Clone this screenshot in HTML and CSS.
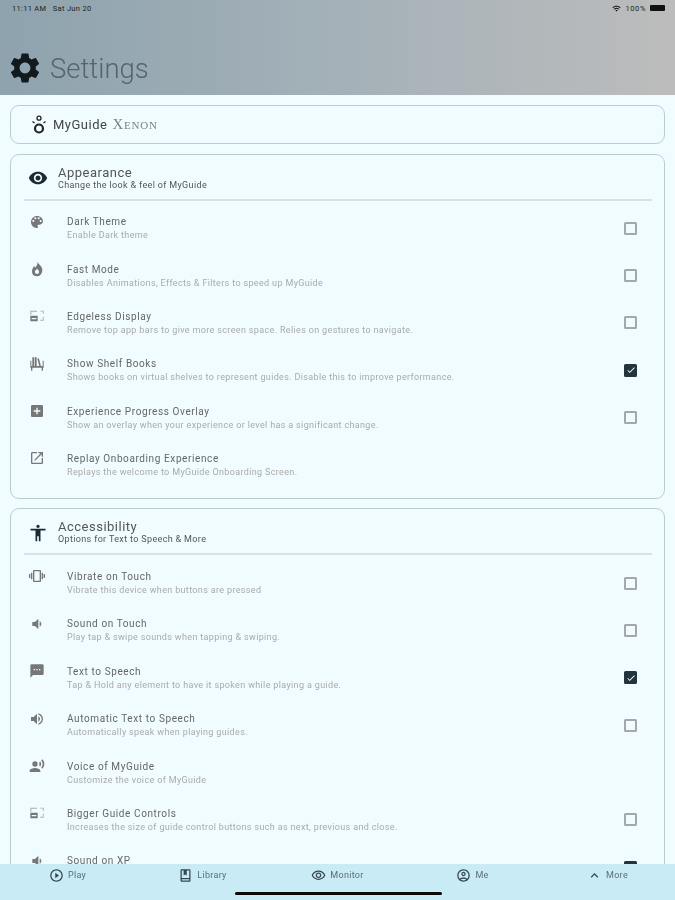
FILE: index.html
```html
<!DOCTYPE html>
<html lang="en">
<head>
	<meta charset="UTF-8">
	<title>Settings</title>
	<link rel="stylesheet" href="styles.css">
</head>
<body>
<div class="page">
	<header class="top">
		<div class="status">
			<span>11:11 AM&nbsp;&nbsp; Sat Jun 20</span>
			<span class="status-right">
				<svg class="wifi" viewBox="0 0 24 24"><path d="M1 9l2 2c4.97-4.97 13.03-4.97 18 0l2-2C16.93 2.93 7.08 2.93 1 9zm8 8l3 3 3-3c-1.65-1.66-4.34-1.66-6 0zm-4-4l2 2c2.76-2.76 7.24-2.76 10 0l2-2C15.14 9.14 8.87 9.14 5 13z"/></svg>
				100%
				<span class="battery"></span>
			</span>
		</div>
		<div class="title-row">
			<svg class="gear" viewBox="0 0 24 24"><path d="M19.14 12.94c.04-.3.06-.61.06-.94 0-.32-.02-.64-.07-.94l2.03-1.58c.18-.14.23-.41.12-.61l-1.92-3.32c-.12-.22-.37-.29-.59-.22l-2.39.96c-.5-.38-1.03-.7-1.62-.94l-.36-2.54c-.04-.24-.24-.41-.48-.41h-3.84c-.24 0-.43.17-.47.41l-.36 2.54c-.59.24-1.13.57-1.62.94l-2.39-.96c-.22-.08-.47 0-.59.22L2.74 8.87c-.12.21-.08.47.12.61l2.03 1.58c-.05.3-.09.63-.09.94s.02.64.07.94l-2.03 1.58c-.18.14-.23.41-.12.61l1.92 3.32c.12.22.37.29.59.22l2.39-.96c.5.38 1.03.7 1.62.94l.36 2.54c.05.24.24.41.48.41h3.84c.24 0 .44-.17.47-.41l.36-2.54c.59-.24 1.13-.56 1.62-.94l2.39.96c.22.08.47 0 .59-.22l1.92-3.32c.12-.22.07-.47-.12-.61l-2.01-1.58zM12 15.6c-1.98 0-3.6-1.62-3.6-3.6s1.62-3.6 3.6-3.6 3.6 1.62 3.6 3.6-1.62 3.6-3.6 3.6z"/></svg>
			<h1>Settings</h1>
		</div>
	</header>

	<main class="content">
		<div class="card brand">
			<svg class="logo" viewBox="0 0 16 20"><circle cx="8" cy="3.2" r="2" stroke-width="1.3"/><circle cx="8" cy="13.500" r="4" stroke-width="2.2"/><path d="M1.500 6.500l2 1.600M14.500 6.500l-2 1.600" stroke-width="1.3"/></svg>
			<span class="brand-name">MyGuide</span>
			<span class="brand-xenon">Xenon</span>
		</div>

		<section class="card">
			<div class="section-head">
				<svg class="section-icon" viewBox="0 0 24 24"><path d="M12 4.5C7 4.5 2.73 7.61 1 12c1.73 4.39 6 7.5 11 7.5s9.27-3.11 11-7.5c-1.73-4.39-6-7.5-11-7.5zM12 17c-2.76 0-5-2.24-5-5s2.24-5 5-5 5 2.24 5 5-2.24 5-5 5zm0-8c-1.66 0-3 1.34-3 3s1.34 3 3 3 3-1.34 3-3-1.34-3-3-3z"/></svg>
				<div>
					<h2>Appearance</h2>
					<p>Change the look &amp; feel of MyGuide</p>
				</div>
			</div>
			<div class="row">
				<svg class="icon" viewBox="0 0 24 24"><path d="M12 3c-4.97 0-9 4.03-9 9s4.03 9 9 9c.83 0 1.5-.67 1.5-1.5 0-.39-.15-.74-.39-1.01-.23-.26-.38-.61-.38-.99 0-.83.67-1.5 1.5-1.5H16c2.76 0 5-2.24 5-5 0-4.42-4.03-8-9-8zm-5.5 9c-.83 0-1.5-.67-1.5-1.5S5.67 9 6.5 9 8 9.67 8 10.5 7.33 12 6.5 12zm3-4C8.67 8 8 7.33 8 6.5S8.67 5 9.5 5s1.5.67 1.5 1.5S10.33 8 9.5 8zm5 0c-.83 0-1.5-.67-1.5-1.5S13.67 5 14.5 5s1.5.67 1.5 1.5S15.33 8 14.5 8zm3 4c-.83 0-1.5-.67-1.5-1.5S16.67 9 17.5 9s1.5.67 1.5 1.5-.67 1.5-1.5 1.5z"/></svg>
				<div class="text"><h3>Dark Theme</h3><p>Enable Dark theme</p></div>
				<span class="box"></span>
			</div>
			<div class="row">
				<svg class="icon" viewBox="0 0 24 24"><path fill-rule="evenodd" d="M13 1c.5 3 5 5.500 6.500 9.500 1.700 4.500-1 12.500-7.500 12.500S3.500 18 5 12.500c.7-2.300 2-3.500 2.500-5.500.8 1 1.300 2 1.500 3C11 8 13 5 13 1zM12 19.500c2 0 3.200-1.400 3.200-3.200 0-2-2-3-3.200-5-1.200 2-3.200 3-3.200 5 0 1.800 1.200 3.200 3.200 3.200z"/></svg>
				<div class="text"><h3>Fast Mode</h3><p>Disables Animations, Effects &amp; Filters to speed up MyGuide</p></div>
				<span class="box"></span>
			</div>
			<div class="row">
				<svg class="icon" viewBox="0 0 24 24"><path d="M2 4h10v1.500H3.500V10H2zM17 4h5v5h-1.200V5.200H17zM20.800 13H22v6h-5v-1.200h3.800z" opacity=".6"/><path d="M2 11.500h11V20H2zM4 15v1.800h7V15z"/></svg>
				<div class="text"><h3>Edgeless Display</h3><p>Remove top app bars to give more screen space. Relies on gestures to navigate.</p></div>
				<span class="box"></span>
			</div>
			<div class="row">
				<svg class="icon" viewBox="0 0 24 24"><path d="M5 2h3v13H5zM9 2h2.500v13H9zM12.500 4l2.300-.6 3 11.200-2.300.6zM2 15h20v2.500H2zM2 7h1.500v8H2zM20.500 7H22v8h-1.500zM3 17.500h2V22H3zM19 17.500h2V22h-2z"/></svg>
				<div class="text"><h3>Show Shelf Books</h3><p>Shows books on virtual shelves to represent guides. Disable this to improve performance.</p></div>
				<span class="box checked"><svg viewBox="0 0 24 24"><path d="M9 16.200L4.800 12l-1.400 1.400L9 19 21 7l-1.400-1.400z"/></svg></span>
			</div>
			<div class="row">
				<svg class="icon" viewBox="0 0 24 24"><path d="M19 3H5c-1.110 0-2 .9-2 2v14c0 1.100.89 2 2 2h14c1.100 0 2-.9 2-2V5c0-1.100-.9-2-2-2zm-2 10h-4v4h-2v-4H7v-2h4V7h2v4h4v2z"/></svg>
				<div class="text"><h3>Experience Progress Overlay</h3><p>Show an overlay when your experience or level has a significant change.</p></div>
				<span class="box"></span>
			</div>
			<div class="row">
				<svg class="icon" viewBox="0 0 24 24"><path d="M19 19H5V5h7V3H5c-1.110 0-2 .9-2 2v14c0 1.100.89 2 2 2h14c1.100 0 2-.9 2-2v-7h-2v7zM14 3v2h3.590l-9.830 9.830 1.410 1.410L19 6.410V10h2V3h-7z"/></svg>
				<div class="text"><h3>Replay Onboarding Experience</h3><p>Replays the welcome to MyGuide Onboarding Screen.</p></div>
			</div>
		</section>

		<section class="card">
			<div class="section-head">
				<svg class="section-icon" viewBox="0 0 24 24"><path d="M12 2c1.100 0 2 .9 2 2s-.9 2-2 2-2-.9-2-2 .9-2 2-2zm9 7h-6v13h-2v-6h-2v6H9V9H3V7h18v2z"/></svg>
				<div>
					<h2>Accessibility</h2>
					<p>Options for Text to Speech &amp; More</p>
				</div>
			</div>
			<div class="row">
				<svg class="icon" viewBox="0 0 24 24"><path d="M0 15h2V9H0v6zm3 2h2V7H3v10zm19-8v6h2V9h-2zm-3 8h2V7h-2v10zM16.500 3h-9C6.670 3 6 3.670 6 4.500v15c0 .83.67 1.500 1.500 1.500h9c.83 0 1.500-.67 1.500-1.500v-15c0-.83-.67-1.500-1.500-1.500zM16 19H8V5h8v14z"/></svg>
				<div class="text"><h3>Vibrate on Touch</h3><p>Vibrate this device when buttons are pressed</p></div>
				<span class="box"></span>
			</div>
			<div class="row">
				<svg class="icon" viewBox="0 0 24 24"><path d="M18.500 12c0-1.770-1.020-3.290-2.500-4.030v8.050c1.480-.73 2.500-2.250 2.500-4.020zM5 9v6h4l5 5V4L9 9H5z"/></svg>
				<div class="text"><h3>Sound on Touch</h3><p>Play tap &amp; swipe sounds when tapping &amp; swiping.</p></div>
				<span class="box"></span>
			</div>
			<div class="row">
				<svg class="icon" viewBox="0 0 24 24"><path d="M20 2H4c-1.100 0-1.990.9-1.990 2L2 22l4-4h14c1.100 0 2-.9 2-2V4c0-1.100-.9-2-2-2zM9 11H7V9h2v2zm4 0h-2V9h2v2zm4 0h-2V9h2v2z"/></svg>
				<div class="text"><h3>Text to Speech</h3><p>Tap &amp; Hold any element to have it spoken while playing a guide.</p></div>
				<span class="box checked"><svg viewBox="0 0 24 24"><path d="M9 16.200L4.800 12l-1.400 1.400L9 19 21 7l-1.400-1.400z"/></svg></span>
			</div>
			<div class="row">
				<svg class="icon" viewBox="0 0 24 24"><path d="M3 9v6h4l5 5V4L7 9H3zm13.500 3c0-1.770-1.020-3.290-2.500-4.030v8.050c1.480-.73 2.500-2.250 2.500-4.020zM14 3.230v2.060c2.890.86 5 3.540 5 6.710s-2.110 5.850-5 6.710v2.060c4.010-.91 7-4.490 7-8.770s-2.990-7.860-7-8.770z"/></svg>
				<div class="text"><h3>Automatic Text to Speech</h3><p>Automatically speak when playing guides.</p></div>
				<span class="box"></span>
			</div>
			<div class="row">
				<svg class="icon" viewBox="0 0 24 24"><circle cx="9" cy="9" r="4"/><path d="M9 15c-2.670 0-8 1.340-8 4v2h16v-2c0-2.660-5.330-4-8-4zm7.760-9.640l-1.680 1.690c.84 1.180.84 2.710 0 3.890l1.680 1.690c2.020-2.020 2.020-5.070 0-7.270zM20.070 2l-1.630 1.630c2.770 3.020 2.770 7.560 0 10.740L20.070 16c3.900-3.890 3.910-9.950 0-14z"/></svg>
				<div class="text"><h3>Voice of MyGuide</h3><p>Customize the voice of MyGuide</p></div>
			</div>
			<div class="row">
				<svg class="icon" viewBox="0 0 24 24"><path d="M2 4h10v1.500H3.500V10H2zM17 4h5v5h-1.200V5.200H17zM20.800 13H22v6h-5v-1.200h3.800z" opacity=".6"/><path d="M2 11.500h11V20H2zM4 15v1.800h7V15z"/></svg>
				<div class="text"><h3>Bigger Guide Controls</h3><p>Increases the size of guide control buttons such as next, previous and close.</p></div>
				<span class="box"></span>
			</div>
			<div class="row">
				<svg class="icon" viewBox="0 0 24 24"><path d="M18.500 12c0-1.770-1.020-3.290-2.500-4.030v8.050c1.480-.73 2.500-2.250 2.500-4.020zM5 9v6h4l5 5V4L9 9H5z"/></svg>
				<div class="text text-top"><h3>Sound on XP</h3></div>
				<span class="box checked"><svg viewBox="0 0 24 24"><path d="M9 16.200L4.800 12l-1.400 1.400L9 19 21 7l-1.400-1.400z"/></svg></span>
			</div>
		</section>
	</main>

	<nav class="tabs">
		<a class="tab"><svg viewBox="0 0 24 24"><path d="M10 16.500l6-4.500-6-4.500v9zM12 2C6.480 2 2 6.480 2 12s4.480 10 10 10 10-4.480 10-10S17.520 2 12 2zm0 18c-4.410 0-8-3.590-8-8s3.590-8 8-8 8 3.590 8 8-3.590 8-8 8z"/></svg>Play</a>
		<a class="tab"><svg viewBox="0 0 24 24"><path d="M18 2H6c-1.100 0-2 .9-2 2v16c0 1.100.9 2 2 2h12c1.100 0 2-.9 2-2V4c0-1.100-.9-2-2-2zm0 18H6v-2h12v2zm0-4H6V4h3v8l2.500-1.500L14 12V4h4v12z"/></svg>Library</a>
		<a class="tab"><svg viewBox="0 0 24 24"><path d="M12 6c3.790 0 7.170 2.130 8.820 5.500C19.170 14.870 15.790 17 12 17s-7.170-2.130-8.820-5.500C4.830 8.130 8.210 6 12 6m0-2C7 4 2.730 7.110 1 11.500 2.730 15.890 7 19 12 19s9.270-3.110 11-7.500C21.270 7.110 17 4 12 4zm0 5c1.380 0 2.500 1.120 2.500 2.500S13.380 14 12 14s-2.500-1.120-2.500-2.500S10.620 9 12 9m0-2c-2.480 0-4.500 2.020-4.500 4.500S9.520 16 12 16s4.500-2.020 4.500-4.500S14.480 7 12 7z"/></svg>Monitor</a>
		<a class="tab"><svg viewBox="0 0 24 24"><path d="M12 2C6.480 2 2 6.480 2 12s4.480 10 10 10 10-4.480 10-10S17.520 2 12 2zM7.350 18.500C8.660 17.560 10.260 17 12 17s3.340.56 4.650 1.500C15.340 19.440 13.740 20 12 20s-3.340-.56-4.650-1.500zm10.790-1.380C16.450 15.800 14.320 15 12 15s-4.450.8-6.140 2.120C4.700 15.730 4 13.950 4 12c0-4.420 3.580-8 8-8s8 3.580 8 8c0 1.950-.7 3.730-1.860 5.120zM12 6c-1.930 0-3.500 1.570-3.500 3.500S10.070 13 12 13s3.500-1.570 3.500-3.500S13.930 6 12 6zm0 5c-.83 0-1.500-.67-1.500-1.500S11.170 8 12 8s1.500.67 1.500 1.500S12.830 11 12 11z"/></svg>Me</a>
		<a class="tab"><svg viewBox="0 0 24 24"><path d="M12 8l-6 6 1.410 1.410L12 10.830l4.590 4.580L18 14z"/></svg>More</a>
		<span class="home-bar"></span>
	</nav>
</div>
</body>
</html>
```

FILE: styles.css
```css
* {
	margin: 0;
	padding: 0;
	box-sizing: border-box;
}

body {
	background: #f0fcff;
	font-family: Roboto, "Liberation Sans", sans-serif;
	overflow: hidden;
}

.page {
	display: flex;
	flex-direction: column;
	height: 900px;
	filter: blur(0.6px);
}

svg {
	fill: currentColor;
	flex: none;
}

/* top bar */
.top {
	height: 95px;
	flex: none;
	background: linear-gradient(90deg, #8ea3ae 0%, #a4b1b8 50%, #bcbcbc 100%);
}

.status {
	display: flex;
	justify-content: space-between;
	align-items: center;
	height: 16px;
	padding: 0 10px 0 12px;
	font-size: 7.5px;
	letter-spacing: 0.3px;
	color: #222;
}

.status-right {
	display: flex;
	align-items: center;
	gap: 4px;
	letter-spacing: 0.6px;
}

.wifi {
	width: 9px;
	height: 9px;
	color: #111;
}

.battery {
	width: 15px;
	height: 6px;
	background: #111;
	border-radius: 1px;
}

.title-row {
	display: flex;
	align-items: center;
	gap: 7px;
	padding: 34px 0 0 7px;
	color: #111a1f;
}

.gear {
	width: 36px;
	height: 36px;
}

h1 {
	font-size: 27.5px;
	font-weight: 300;
	color: #56646c;
}

/* content */
.content {
	flex: 1;
	min-height: 0;
	overflow: hidden;
	display: flex;
	flex-direction: column;
	gap: 9.5px;
	padding: 10px 10px 0;
}

.card {
	flex: none;
	border: 1px solid #bccccd;
	border-radius: 9px;
	padding: 0 12px 9px 13px;
}

.brand {
	display: flex;
	align-items: center;
	height: 39px;
	padding: 0 0 0 20px;
}

.logo {
	width: 16px;
	height: 20px;
	margin-right: 6px;
	fill: none;
	stroke: #222;
}

.brand-name {
	font-size: 13px;
	letter-spacing: 0.5px;
	color: #444;
}

.brand-xenon {
	margin-left: 5px;
	font-family: "Liberation Serif", serif;
	font-size: 15px;
	font-variant: small-caps;
	letter-spacing: 0.8px;
	color: #808080;
}

.section-head {
	display: flex;
	align-items: center;
	height: 46px;
	padding-top: 3px;
	border-bottom: 2px solid #d5e3e4;
	margin-bottom: 4px;
}

.section-icon {
	width: 20px;
	height: 20px;
	margin: 0 10px 0 4px;
	color: #1c2a30;
}

h2 {
	font-size: 13px;
	font-weight: 400;
	letter-spacing: 0.5px;
	line-height: 14px;
	color: #555;
}

.section-head p {
	font-size: 9px;
	letter-spacing: 0.35px;
	line-height: 11px;
	color: #555;
}

.row {
	display: flex;
	align-items: center;
	height: 47.4px;
	padding-left: 5px;
}

.icon {
	align-self: flex-start;
	width: 16px;
	height: 16px;
	margin: 9px 22px 0 0;
	color: #777;
}

.text {
	flex: 1;
	padding-top: 1px;
}

.text-top {
	align-self: flex-start;
	padding-top: 10px;
}

h3 {
	font-size: 10px;
	font-weight: 400;
	letter-spacing: 0.6px;
	line-height: 14px;
	color: #666;
}

.row p {
	font-size: 9px;
	letter-spacing: 0.35px;
	line-height: 13px;
	color: #aaa;
}

.box {
	display: flex;
	align-items: center;
	justify-content: center;
	width: 13px;
	height: 13px;
	margin-right: 15px;
	border: 2px solid #a3a9aa;
	border-radius: 1.5px;
}

.box svg {
	width: 10px;
	height: 10px;
	color: #fff;
}

.checked {
	background: #23343e;
	border-color: #23343e;
}

/* bottom tabs */
.tabs {
	position: relative;
	display: grid;
	grid-template-columns: repeat(5, 1fr);
	height: 36px;
	flex: none;
	background: #c9ebf6;
}

.tab {
	display: flex;
	align-items: flex-start;
	justify-content: center;
	gap: 4px;
	padding-top: 3px;
	font-size: 9px;
	letter-spacing: 0.3px;
	line-height: 16px;
	color: #5c6e76;
}

.tab svg {
	width: 15px;
	height: 15px;
	margin-top: 1px;
	color: #33464f;
}

.home-bar {
	position: absolute;
	left: 235px;
	bottom: 5px;
	width: 207px;
	height: 3px;
	border-radius: 2px;
	background: #0a0a0a;
}
```
